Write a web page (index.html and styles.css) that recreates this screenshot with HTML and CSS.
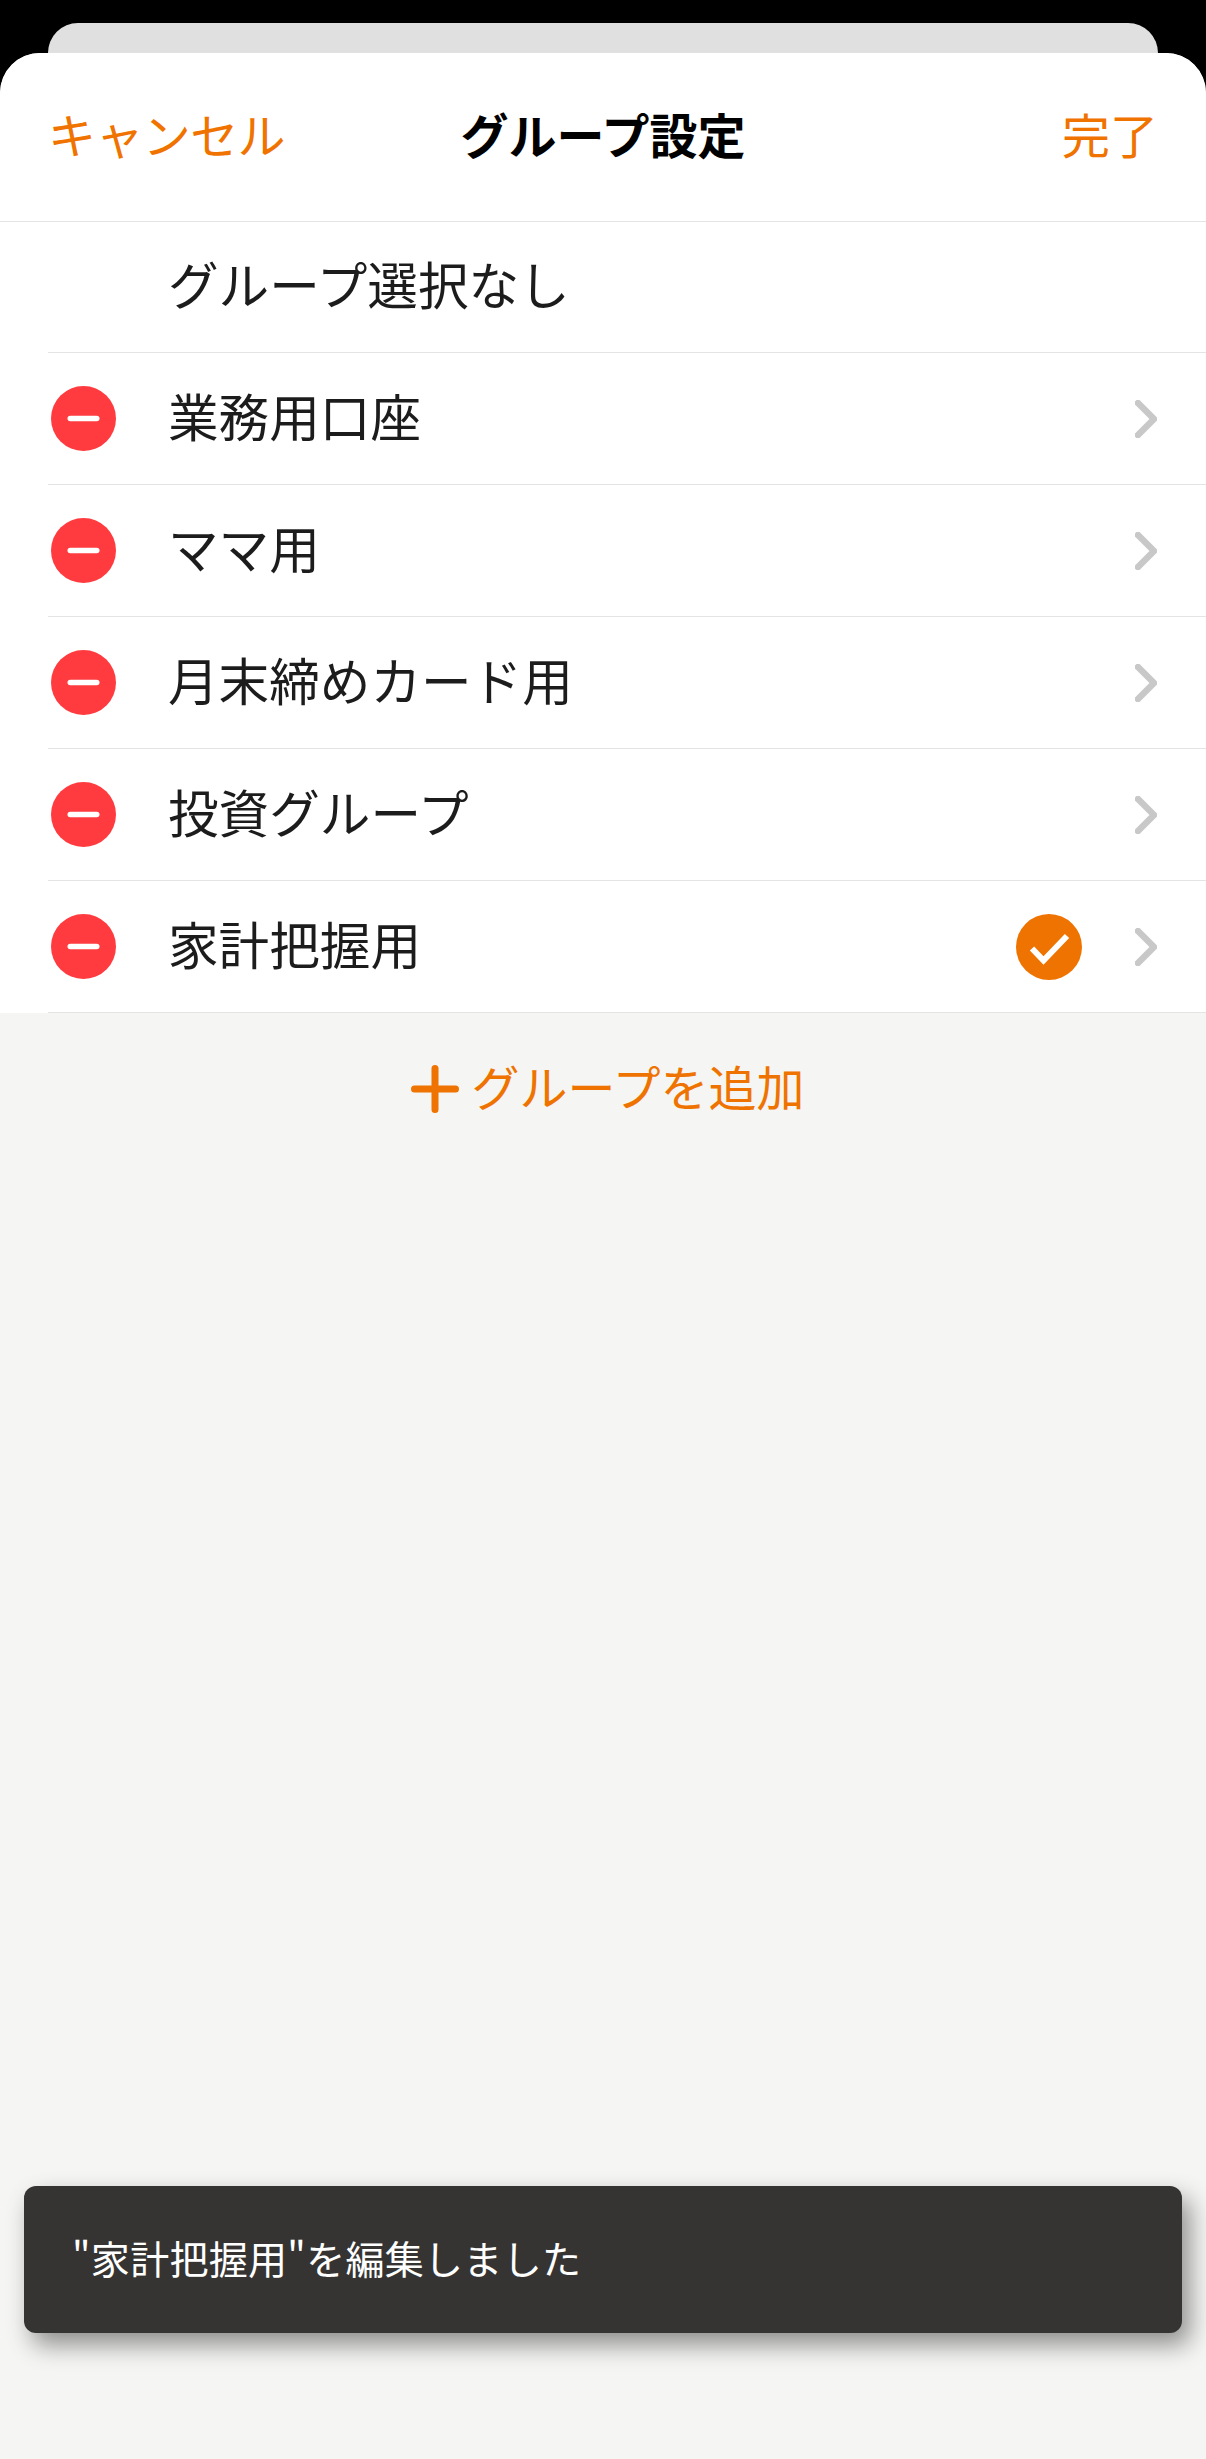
FILE: index.html
```html
<!DOCTYPE html>
<html lang="ja">
<head>
<meta charset="utf-8">
<title>グループ設定</title>
<link rel="stylesheet" href="styles.css">
</head>
<body>
<div class="screen">
  <div class="back-card"></div>
  <main class="sheet">
    <header class="nav">
      <span class="nav-btn nav-cancel">キャンセル</span>
      <h1 class="nav-title">グループ設定</h1>
      <span class="nav-btn nav-done">完了</span>
    </header>
    <ul class="list">
      <li class="row"><span class="row-label">グループ選択なし</span></li>
      <li class="row">
        <svg class="minus" viewBox="0 0 65 65"><circle cx="32.5" cy="32.5" r="32.5"/><rect x="16.5" y="29.75" width="32" height="5.500" rx="2.750"/></svg>
        <span class="row-label">業務用口座</span>
        <svg class="chev" viewBox="0 0 22 38"><path d="M3 3l16 16L3 35"/></svg>
      </li>
      <li class="row">
        <svg class="minus" viewBox="0 0 65 65"><circle cx="32.5" cy="32.5" r="32.5"/><rect x="16.5" y="29.75" width="32" height="5.500" rx="2.750"/></svg>
        <span class="row-label">ママ用</span>
        <svg class="chev" viewBox="0 0 22 38"><path d="M3 3l16 16L3 35"/></svg>
      </li>
      <li class="row">
        <svg class="minus" viewBox="0 0 65 65"><circle cx="32.5" cy="32.5" r="32.5"/><rect x="16.5" y="29.75" width="32" height="5.500" rx="2.750"/></svg>
        <span class="row-label">月末締めカード用</span>
        <svg class="chev" viewBox="0 0 22 38"><path d="M3 3l16 16L3 35"/></svg>
      </li>
      <li class="row">
        <svg class="minus" viewBox="0 0 65 65"><circle cx="32.5" cy="32.5" r="32.5"/><rect x="16.5" y="29.75" width="32" height="5.500" rx="2.750"/></svg>
        <span class="row-label">投資グループ</span>
        <svg class="chev" viewBox="0 0 22 38"><path d="M3 3l16 16L3 35"/></svg>
      </li>
      <li class="row">
        <svg class="minus" viewBox="0 0 65 65"><circle cx="32.5" cy="32.5" r="32.5"/><rect x="16.5" y="29.75" width="32" height="5.500" rx="2.750"/></svg>
        <span class="row-label">家計把握用</span>
        <svg class="check" viewBox="0 0 66 66"><circle cx="33" cy="33" r="33"/><path d="M16 34.500l11.500 12L51 22"/></svg>
        <svg class="chev" viewBox="0 0 22 38"><path d="M3 3l16 16L3 35"/></svg>
      </li>
    </ul>
    <div class="add">
      <svg class="plus" viewBox="0 0 48 48"><path d="M3.500 24h41M24 3.500v41"/></svg>
      <span class="add-label">グループを追加</span>
    </div>
  </main>
  <div class="toast"><span class="toast-text">"家計把握用"を編集しました</span></div>
</div>
</body>
</html>
```
FILE: styles.css
```css
* { box-sizing: border-box; }
html, body { margin: 0; padding: 0; }
body {
  background: #000;
  font-family: "Noto Sans CJK JP", "Noto Sans", sans-serif;
}
.screen {
  position: relative;
  width: 1206px;
  height: 2459px;
  padding-top: 23px;
  display: flex;
  flex-direction: column;
  overflow: hidden;
}
.back-card {
  flex: none;
  height: 30px;
  margin: 0 48px;
  background: #e0e0e0;
  border-radius: 30px 30px 0 0;
}
.sheet {
  flex: 1;
  background: #f5f5f3;
  border-radius: 40px 40px 0 0;
  overflow: hidden;
}
.nav {
  height: 169px;
  background: #fff;
  padding: 0 48px;
  display: grid;
  grid-template-columns: 1fr auto 1fr;
  align-items: center;
  border-bottom: 1px solid #e4e4e4;
}
.nav-btn {
  padding-bottom: 9px;
  font-size: 48px;
  line-height: 60px;
  color: #f07300;
}
.nav-cancel { letter-spacing: -0.6px; }
.nav-done { justify-self: end; }
.nav-title {
  margin: 0;
  padding-bottom: 9px;
  font-size: 48px;
  line-height: 60px;
  font-weight: 700;
  color: #000;
}
.list {
  margin: 0;
  padding: 0 0 0 48px;
  list-style: none;
  background: #fff;
}
.row {
  height: 132px;
  display: flex;
  align-items: center;
  padding-right: 49px;
  border-bottom: 1px solid #e4e4e4;
}
.row:first-child { height: 131px; }
.row-label {
  flex: 1;
  margin-left: 120px;
  padding-bottom: 8px;
  font-size: 50.600px;
  line-height: 64px;
  color: #1c1c1c;
}
.minus {
  flex: none;
  width: 65px;
  height: 65px;
  margin-left: 3px;
  margin-right: -68px;
}
.minus circle { fill: #ff3b3f; }
.minus rect { fill: #fff; }
.chev {
  flex: none;
  width: 22px;
  height: 38px;
}
.chev path {
  fill: none;
  stroke: #c8c8c8;
  stroke-width: 6.500;
  stroke-linecap: round;
  stroke-linejoin: round;
}
.check {
  flex: none;
  width: 66px;
  height: 66px;
  margin-right: 53.500px;
}
.check circle { fill: #ef7300; }
.check path {
  fill: none;
  stroke: #fff;
  stroke-width: 6;
}
.add {
  height: 151px;
  padding-left: 10px;
  display: flex;
  align-items: center;
  justify-content: center;
  gap: 12px;
  font-size: 48px;
  line-height: 60px;
  color: #ef7300;
}
.add-label { padding-bottom: 8px; }
.plus {
  flex: none;
  width: 48px;
  height: 48px;
}
.plus path {
  fill: none;
  stroke: #ef7300;
  stroke-width: 7;
  stroke-linecap: round;
}
.toast {
  position: absolute;
  left: 24px;
  right: 24px;
  bottom: 126px;
  height: 147px;
  padding: 0 48px;
  display: flex;
  align-items: center;
  background: #353433;
  border-radius: 12px;
  color: #fff;
  font-size: 39px;
  line-height: 50px;
  letter-spacing: 0.3px;
  box-shadow: 8px 12px 24px rgba(0, 0, 0, 0.42);
}
.toast-text { padding-bottom: 6px; }
```
